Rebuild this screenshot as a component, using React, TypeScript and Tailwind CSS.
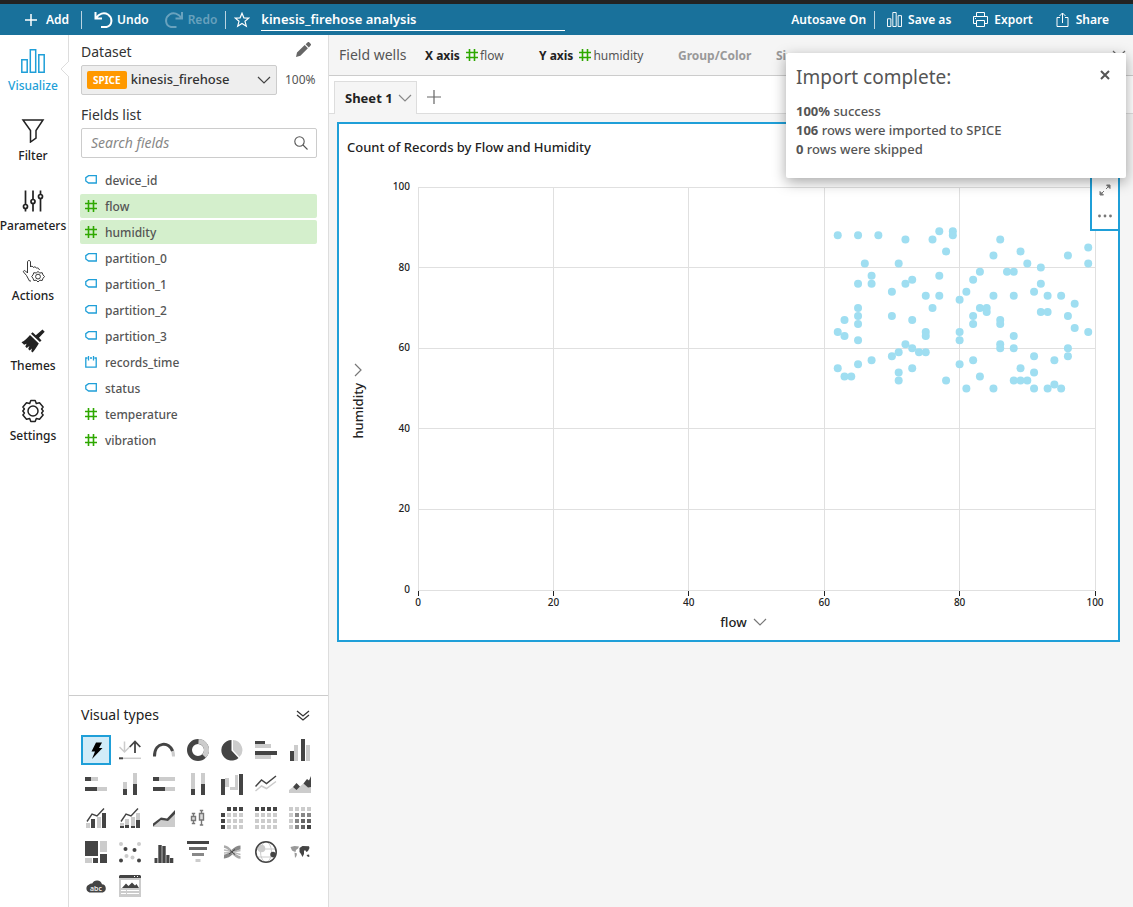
import React, { useState } from "react";

const DARK = "#444444";
const LIGHT = "#cccccc";

const points = [
  [62, 88], [65, 88], [68, 88], [72, 87], [76, 87], [77, 89], [79, 89], [79, 88],
  [78, 84], [86, 87], [85, 83], [89, 84], [90, 81], [92, 80], [96, 83], [99, 85],
  [99, 81], [66, 81], [71, 81], [67, 78], [67, 76], [65, 76], [72, 76], [73, 77],
  [70, 74], [77, 78], [75, 73], [77, 73], [76, 70], [83, 79], [82, 77], [81, 74],
  [80, 72], [87, 79], [88, 79], [85, 73], [88, 73], [83, 70], [84, 70], [84, 69],
  [82, 68], [82, 66], [86, 67], [86, 66], [91, 74], [92, 76], [93, 73], [95, 73],
  [97, 71], [96, 68], [92, 69], [93, 69], [97, 65], [99, 64], [65, 70], [65, 68],
  [65, 66], [65, 62], [63, 67], [62, 64], [63, 63], [70, 68], [73, 67], [75, 64],
  [75, 63], [72, 61], [73, 60], [74, 59], [75, 59], [71, 59], [70, 58], [67, 57],
  [65, 56], [62, 55], [63, 53], [64, 53], [71, 54], [71, 52], [73, 55], [78, 52],
  [80, 64], [80, 62], [80, 56], [82, 57], [83, 53], [81, 50], [85, 50], [86, 61],
  [86, 60], [88, 63], [88, 60], [91, 58], [91, 54], [89, 55], [88, 52], [89, 52],
  [90, 52], [91, 50], [93, 50], [94, 51], [95, 50], [94, 57], [96, 60], [96, 58],
];

const ticks = [0, 20, 40, 60, 80, 100];

const fields = [
  { name: "device_id", type: "string" },
  { name: "flow", type: "number", selected: true },
  { name: "humidity", type: "number", selected: true },
  { name: "partition_0", type: "string" },
  { name: "partition_1", type: "string" },
  { name: "partition_2", type: "string" },
  { name: "partition_3", type: "string" },
  { name: "records_time", type: "date" },
  { name: "status", type: "string" },
  { name: "temperature", type: "number" },
  { name: "vibration", type: "number" },
];

function HashIcon() {
  return (
    <svg width="12" height="12" viewBox="0 0 12 12" fill="none" stroke="#2ea800" strokeWidth="1.6">
      <path d="M3.5 0v12M8.5 0v12M0 3.5h12M0 8.5h12" />
    </svg>
  );
}

function FieldIcon({ type }: { type: string }) {
  if (type === "number") return <HashIcon />;
  if (type === "date")
    return (
      <svg width="12" height="12" viewBox="0 0 12 12" fill="none" stroke="#1f9fd8" strokeWidth="1.3">
        <path d="M2.5 2H.8v9.2h10.4V2H9.5M5 2h2M3.5 0v4.500M8.500 0v4.500" />
      </svg>
    );
  return (
    <svg width="12" height="12" viewBox="0 0 12 12" fill="none" stroke="#1f9fd8" strokeWidth="1.3">
      <path d="M3.6 1.600h7.7v7.400H3.6L.8 7V3.600z" />
    </svg>
  );
}

function Chevron({ color = "#666666" }: { color?: string }) {
  return (
    <svg width="14" height="14" viewBox="0 0 14 14" fill="none" stroke={color} strokeWidth="1.2">
      <path d="M1 4l6 6 6-6" />
    </svg>
  );
}

function BarsIcon({ size }: { size: number }) {
  return (
    <svg width={size} height={size} viewBox="0 0 24 24" fill="none" stroke="currentColor" strokeWidth="1.5">
      <path d="M.8 10.8h5.4v12.4H.8zM9.3.8h5.4v22.4H9.3zM17.8 5.8h5.4v17.4h-5.4z" />
    </svg>
  );
}

const navItems = [
  { label: "Visualize", icon: <BarsIcon size={24} /> },
  {
    label: "Filter",
    icon: (
      <svg width="24" height="24" viewBox="0 0 24 24" fill="none" stroke="currentColor" strokeWidth="1.5">
        <path d="M2 1h20l-7 10.5v7.5L9.5 23V11.5z" />
      </svg>
    ),
  },
  {
    label: "Parameters",
    icon: (
      <svg width="24" height="24" viewBox="0 0 24 24" fill="none" stroke="currentColor" strokeWidth="1.7">
        <path d="M4.5 1.500v13.500M4.5 20v2.5M12 1.500V10M12 15v7.5M19.5 1.500V5M19.5 10v12.5" />
        <circle cx="4.5" cy="17.5" r="2" />
        <circle cx="12" cy="12.5" r="2" />
        <circle cx="19.5" cy="7.500" r="2" />
      </svg>
    ),
  },
  {
    label: "Actions",
    icon: (
      <svg width="24" height="24" viewBox="0 0 24 24" fill="none" stroke="currentColor" strokeWidth="0.9">
        <path d="M10 22H8.5l-3-5.5-3-3.5c-.6-1 1-2 2-1l2 2V3c0-2 3-2 3 0v5c.5-1.2 2.5-1 3 .5.6-1 2.4-.8 3 .7 1-.7 2.5 0 3 1.8" />
        <path d="M17 12.5l1.8 1.5 2.4-.3.8 2.2 1.5 1.6-1.5 1.8-.8 2.2-2.4-.3L17 23l-1.8-1.8-2.4.3-.8-2.2-1.300-1.8 1.300-1.6.8-2.2 2.4.3z" />
        <circle cx="17" cy="17.6" r="2.4" />
      </svg>
    ),
  },
  {
    label: "Themes",
    icon: (
      <svg width="24" height="24" viewBox="0 0 24 24" fill="currentColor">
        <path d="M21.5.5l2.2 2.3-5.7 6 2.5 2.7-1.600 1.6L10 4.800l1.600-1.600 3.200 3.100z" />
        <path d="M9 5.900l8.800 8.5c-1.800 2.8-3.600 6.2-6.200 9.1l-1.400-1.300.8-2.600-2.400 1.800-1.400-1.300 1.200-3-2.700 1.800-1.400-1.5 1.300-2.600-2.5 1L.5 13.300C3.800 11.600 6.200 9.200 9 5.900z" />
      </svg>
    ),
  },
  {
    label: "Settings",
    icon: (
      <svg width="24" height="24" viewBox="0 0 24 24" fill="none" stroke="currentColor" strokeWidth="1.5" strokeLinejoin="round">
        <path d="M9.8 1.500h4.400l1.100 3 3.200-.7 3.600 4.200-1.500 2 1.600 2-1.600 2 1.500 2-3.600 4.200-3.200-.7-1.100 3H9.800l-1.100-3-3.200.7L1.900 16l1.500-2-1.600-2 1.600-2-1.500-2 3.600-4.200 3.200.7z" />
        <circle cx="12" cy="12" r="5" />
      </svg>
    ),
  },
];

function Squares({ colors }: { colors: string[] }) {
  return (
    <>
      {colors.map((c, i) => (
        <rect key={i} x={(i % 4) * 6} y={Math.floor(i / 4) * 6} width="4" height="4" fill={c} />
      ))}
    </>
  );
}

// every drawing sits on a 22 x 22 grid
const visualTypes = [
  { name: "AutoGraph", art: <path fill="#000" d="M11 3.5h6L14 9h3.5L7 20l3-7.5H6.5z" /> },
  {
    name: "KPI",
    art: (
      <g fill="none" strokeWidth="1.5">
        <path stroke={LIGHT} d="M5.5 2.5V13M.5 8l5 5 5-5" />
        <path stroke={DARK} strokeWidth="1.8" d="M16 14V2.5M10.7 8L16 2.5 21.3 8" />
        <path stroke={LIGHT} d="M4 19.3h18" />
        <path stroke={DARK} strokeWidth="2" d="M0 19.3h4" />
      </g>
    ),
  },
  {
    name: "Gauge chart",
    art: (
      <g fill="none" strokeWidth="3">
        <path stroke={LIGHT} d="M18.5 9.5Q20.5 12 20.5 17.5" />
        <path stroke={DARK} d="M1.5 17.5C1.5 2 17 2.5 19.5 12" />
      </g>
    ),
  },
  {
    name: "Donut chart",
    art: (
      <g fill="none" strokeWidth="5">
        <circle cx="11" cy="11" r="8.5" stroke={DARK} />
        <path stroke={LIGHT} d="M11.5 2.5A8.5 8.5 0 0 1 17 17" />
      </g>
    ),
  },
  {
    name: "Pie chart",
    art: (
      <>
        <path fill={DARK} d="M10.5 1v10.5l7 7.5A10.3 10.3 0 1 1 10.5 1z" />
        <path fill={LIGHT} d="M12 1a10 10 0 0 1 6.5 17L12 11z" />
      </>
    ),
  },
  {
    name: "Horizontal bar chart",
    art: (
      <>
        <path fill={LIGHT} d="M0 5h16v4H0zM0 16h16v4H0z" />
        <path fill={DARK} d="M0 2h10v3H0zM0 12h22v4H0z" />
      </>
    ),
  },
  {
    name: "Vertical bar chart",
    art: (
      <>
        <path fill={DARK} d="M1 12h4v10H1zM12 0h4v22h-4z" />
        <path fill={LIGHT} d="M5 6h4v16H5zM17 6h4v16h-4z" />
      </>
    ),
  },
  {
    name: "Horizontal stacked bar chart",
    art: (
      <>
        <path fill={DARK} d="M0 4h6v4H0zM0 14h12v4H0z" />
        <path fill={LIGHT} d="M6 4h7v4H6zM12 14h10v4H12z" />
      </>
    ),
  },
  {
    name: "Vertical stacked bar chart",
    art: (
      <>
        <path fill={DARK} d="M4 16h4v6H4zM14 11h4v11h-4z" />
        <path fill={LIGHT} d="M4 9h4v7H4zM14 0h4v11h-4z" />
      </>
    ),
  },
  {
    name: "Horizontal stacked 100% bar chart",
    art: (
      <>
        <path fill={DARK} d="M0 4h6v4H0zM0 14h12v4H0z" />
        <path fill={LIGHT} d="M6 4h16v4H6zM12 14h10v4H12z" />
      </>
    ),
  },
  {
    name: "Vertical stacked 100% bar chart",
    art: (
      <>
        <path fill={DARK} d="M4 16h4v6H4zM14 11h4v11h-4z" />
        <path fill={LIGHT} d="M4 0h4v16H4zM14 0h4v11h-4z" />
      </>
    ),
  },
  {
    name: "Waterfall chart",
    art: (
      <>
        <path fill={DARK} d="M0 6h4v16H0zM18 1h4v21h-4z" />
        <path fill={LIGHT} d="M4 5h4v9H4zM9 14h5v3H9zM14 2h3v15h-3z" />
      </>
    ),
  },
  {
    name: "Line chart",
    art: (
      <g fill="none" strokeWidth="1.5">
        <path stroke={DARK} d="M.5 13.5L6.5 7l5 3.5L21 3" />
        <path stroke={LIGHT} d="M.5 18l6-5 5 2.5 9.5-7" />
      </g>
    ),
  },
  {
    name: "Area chart",
    art: (
      <>
        <path fill={LIGHT} d="M0 17l4-3 4 2 7-6 4 4h3v6H0z" />
        <path fill={DARK} d="M4 14l3.5-4 3.5 3.5L7.5 17zM14.5 10.5L18 6l2 1.500L22 3v11l-3 .5z" />
      </>
    ),
  },
  {
    name: "Clustered bar combo chart",
    art: (
      <>
        <path fill={LIGHT} d="M1 16h4v5H1zM12 10h4v11h-4z" />
        <path fill={DARK} d="M6 12h4v9H6zM17 6h4v15h-4z" />
        <path fill="none" stroke={DARK} strokeWidth="1.4" d="M2 14.5L7 7l5 2 7-7.5" />
      </>
    ),
  },
  {
    name: "Stacked bar combo chart",
    art: (
      <>
        <path fill={LIGHT} d="M1 16h4v3H1zM6 12h4v6H6zM12 10h4v9h-4zM17 6h4v7h-4z" />
        <path fill={DARK} d="M1 19h4v2H1zM6 18h4v3H6zM12 19h4v2h-4zM17 13h4v8h-4z" />
        <path fill="none" stroke={DARK} strokeWidth="1.4" d="M2 14.5L7 7l5 2 7-7.5" />
      </>
    ),
  },
  {
    name: "Area line chart",
    art: (
      <>
        <path fill={LIGHT} d="M0 18l8-5 7 1 7-9v15H0z" />
        <path fill={DARK} d="M0 16.500l8-6 6 1 8-8.500v4l-7 7-7-1L0 19.500z" />
      </>
    ),
  },
  {
    name: "Box plot",
    art: (
      <g fill="#dddddd" stroke="#777777" strokeWidth="1.4">
        <path d="M6.5 6v11M4.8 6.500h3.4M4.8 16.5h3.4M14.5 3v15.5M12.8 3.5h3.4M12.8 18h3.4" />
        <path d="M4.5 9.500h4v4h-4zM12.5 6.500h4v6.500h-4z" />
      </g>
    ),
  },
  {
    name: "Pivot table",
    art: <Squares colors={["none", DARK, DARK, DARK, DARK, LIGHT, LIGHT, LIGHT, DARK, LIGHT, LIGHT, LIGHT, DARK, LIGHT, LIGHT, LIGHT]} />,
  },
  {
    name: "Table",
    art: <Squares colors={[DARK, DARK, DARK, DARK, LIGHT, LIGHT, LIGHT, LIGHT, LIGHT, LIGHT, LIGHT, LIGHT, LIGHT, LIGHT, LIGHT, LIGHT]} />,
  },
  {
    name: "Heat map",
    art: <Squares colors={[LIGHT, LIGHT, LIGHT, LIGHT, LIGHT, "#888888", "#888888", "#888888", LIGHT, "#888888", "#666666", "#666666", LIGHT, "#888888", "#666666", DARK]} />,
  },
  {
    name: "Tree map",
    art: (
      <>
        <path fill={DARK} d="M0 0h13v15H0zM15 13h7v9h-7zM8 17h5v5H8z" />
        <path fill={LIGHT} d="M15 0h7v11h-7zM0 17h7v5H0z" />
      </>
    ),
  },
  {
    name: "Scatter plot",
    art: (
      <>
        <g fill={DARK}>
          <circle cx="6.5" cy="8" r="2" />
          <circle cx="15.5" cy="9" r="2" />
          <circle cx="2" cy="19.5" r="2" />
          <circle cx="20" cy="19.5" r="2" />
        </g>
        <g fill={LIGHT}>
          <circle cx="2" cy="3" r="2" />
          <circle cx="20" cy="3" r="2" />
          <circle cx="7.5" cy="15" r="2" />
          <circle cx="13.5" cy="16.5" r="2" />
        </g>
      </>
    ),
  },
  {
    name: "Histogram",
    art: <path fill={DARK} d="M1.5 17h3v5h-3zM5.300 4h3.400v18H5.300zM9.300 5h3.400v17H9.300zM13.300 14h3.200v8h-3.200zM17 17h3.300v5H17z" />,
  },
  {
    name: "Funnel chart",
    art: (
      <>
        <path fill={DARK} d="M0 0h22v3H0z" />
        <path fill="#666666" d="M2 6h18v3H2z" />
        <path fill="#888888" d="M5 12h12v3H5z" />
        <path fill={LIGHT} d="M8.5 18h5v3h-5z" />
      </>
    ),
  },
  {
    name: "Sankey diagram",
    art: (
      <g fill="none">
        <path stroke="#888888" strokeWidth="4" d="M3 15.5C10 16 12 6.500 19.500 6.500" />
        <path stroke="#aaaaaa" strokeWidth="2.5" d="M3 5.5C10 6 12 16.5 19.500 16.5" />
        <path stroke="#bbbbbb" strokeWidth="1.5" d="M3 9c6 .5 10 3 16.500 4.500M3 12c7 0 11-2 16.500-2.500" />
        <path stroke={DARK} strokeWidth="1" d="M8 13l6-4.500M9 9.500l5 4" />
      </g>
    ),
  },
  {
    name: "Points on map",
    art: (
      <>
        <g fill="none" stroke={LIGHT} strokeWidth="1">
          <ellipse cx="11" cy="11" rx="5.5" ry="10" />
          <path d="M1 8h20M2 16h18" />
        </g>
        <circle cx="6.5" cy="7.5" r="3.8" fill={LIGHT} />
        <circle cx="18" cy="13.5" r="2.7" fill={DARK} />
        <circle cx="11" cy="11" r="10.200" fill="none" stroke={DARK} strokeWidth="1.6" />
      </>
    ),
  },
  {
    name: "Filled map",
    art: (
      <>
        <path fill="#999999" d="M1.5 6l4-1 4.5.5-1 2L7 9l-.5 2L5 10.5 3 9.5zM5.5 11.5l2.5 1-.5 2.500L6 17z" />
        <path fill={DARK} d="M10.5 7l3-2 6.500.3.5 1.700-1.500 3-1.500 1-1.500-2-1 1v3l-1.500 3-1.500-3-1.500-2zM17.5 14l2.500-.5.5 2-1.500.5z" />
      </>
    ),
  },
  {
    name: "Word cloud",
    art: (
      <>
        <path fill={DARK} d="M4.500 17.500a4.200 4.200 0 0 1-.3-8 3 3 0 0 1 3-1A5.300 5.300 0 0 1 17 9.300a4.200 4.200 0 0 1 .8 8.200z" />
        <text x="11" y="15.500" textAnchor="middle" fontSize="7" fontWeight="500" fill="#ffffff">abc</text>
      </>
    ),
  },
  {
    name: "Insight",
    art: (
      <>
        <path fill={LIGHT} d="M0 3h22v19H0z" />
        <path fill={DARK} d="M1 0h20l1 1v2H0V1z" />
        <path fill="#fff" d="M2 5h18v8H2zM2 15h5v1H2zM8 15h12v1H8zM2 18h5v1H2zM8 18h12v1H8zM15 1h1v1h-1zM18 1h1v1h-1z" />
        <path fill={DARK} d="M3 13l4-4.500L9.500 11 13 7.500l3 3 1.500-1.500L20 13z" />
      </>
    ),
  },
];

function Header() {
  return (
    <header className="border-t-4 border-[#232323] bg-[#19719b] h-[35px] shrink-0 flex items-center px-6 text-white text-xs font-semibold">
      <button className="flex items-center gap-2">
        <svg width="14" height="14" viewBox="0 0 14 14" stroke="currentColor" strokeWidth="1.5">
          <path d="M7 1v12M1 7h12" />
        </svg>
        Add
      </button>
      <div className="w-px h-[18px] bg-white/70 ml-3" />
      <button className="flex items-center gap-1 ml-3">
        <svg width="19" height="16" viewBox="0 0 19 16" fill="none" stroke="currentColor" strokeWidth="2">
          <path d="M1.5 0v6.5H8M2 6c3-4.5 8-6 12-3.5 5 3.5 4.5 11-1.5 12.5H7" />
        </svg>
        Undo
      </button>
      <button disabled className="flex items-center gap-1 ml-4 text-white/35">
        <svg width="19" height="16" viewBox="0 0 19 16" fill="none" stroke="currentColor" strokeWidth="2">
          <path d="M17 0v6.5h-6.5M16.5 6c-3-4.5-8-6-12-3.5-5 3.5-4.5 11 1.5 12.5h5.5" />
        </svg>
        Redo
      </button>
      <div className="w-px h-[18px] bg-white/70 ml-2" />
      <button aria-label="Favorite" className="ml-2">
        <svg width="16" height="16" viewBox="0 0 16 16" fill="none" stroke="currentColor" strokeWidth="1.2">
          <path d="M8 1.200l1.900 4.600 4.900.3-3.800 3.200 1.300 4.900L8 11.500l-4.300 2.700L5 9.300 1.200 6.100l4.900-.3z" />
        </svg>
      </button>
      <input
        aria-label="Analysis name"
        defaultValue="kinesis_firehose analysis"
        className="ml-[11px] w-[304px] h-[22px] border-b border-white bg-transparent text-[13px] outline-none"
      />
      <span className="ml-auto">Autosave On</span>
      <div className="w-px h-[18px] bg-white/70 ml-2" />
      <button className="flex items-center gap-[6px] ml-3">
        <BarsIcon size={15} />
        Save as
      </button>
      <button className="flex items-center gap-[6px] ml-[22px]">
        <svg width="15" height="15" viewBox="0 0 15 15" fill="none" stroke="currentColor">
          <path d="M3.5 4V.5h8V4M3.5 11.5h-3v-7h14v7h-3M3.5 8.500h8v6h-8zM2 6.500h1" />
        </svg>
        Export
      </button>
      <button className="flex items-center gap-[6px] ml-[22px]">
        <svg width="15" height="15" viewBox="0 0 15 15" fill="none" stroke="currentColor">
          <path d="M5 5.500H2v9h11v-9h-3M7.500 11V1M4.500 4l3-3 3 3" />
        </svg>
        Share
      </button>
    </header>
  );
}

function Nav() {
  return (
    <nav className="w-[69px] shrink-0 border-r border-[#dddddd] relative flex flex-col pt-[14px] pr-[2px] gap-[25px]">
      {navItems.map((item, i) => (
        <button
          key={item.label}
          className={
            i === 0
              ? "h-[45px] flex flex-col items-center justify-between text-xs font-medium text-[#1f9fd8]"
              : "h-[45px] flex flex-col items-center justify-between text-xs font-medium text-[#222222]"
          }
        >
          {item.icon}
          {item.label}
        </button>
      ))}
      <svg className="absolute top-[26px] -right-px" width="9" height="16" viewBox="0 0 9 16" fill="#fff" stroke="#dddddd">
        <path d="M9 0L1 8l8 8" />
      </svg>
    </nav>
  );
}

function DataPanel() {
  const [visual, setVisual] = useState("AutoGraph");

  return (
    <aside className="w-[260px] shrink-0 border-r border-[#dddddd] flex flex-col text-[#333333]">
      <div className="px-[11px] pt-[7px] flex flex-col flex-1">
        <div className="flex items-center justify-between pl-px pr-[5px] h-5">
          <label htmlFor="dataset" className="text-sm">Dataset</label>
          <button aria-label="Edit dataset" className="mb-1">
            <svg width="18" height="18" viewBox="0 0 18 18" fill="#666666">
              <path d="M2 16l1-4.500 7.700-7.400 3.200 3.200-7.500 7.500zM11.600 3.200L13.500 1.500c.6-.6 1.300-.6 1.900 0l1.200 1.200c.6.6.6 1.200 0 1.800l-1.800 1.900z" />
            </svg>
          </button>
        </div>
        <div className="flex items-center pl-px mt-[3px]">
          <div className="w-[196px] h-[30px] bg-[#eeeeee] border border-[#cccccc] rounded-xs flex items-center pl-[5px] relative">
            <span className="bg-[#ff9900] text-white text-[10px] leading-[18px] font-bold px-[6px] rounded-xs">SPICE</span>
            <select id="dataset" className="appearance-none bg-transparent text-[13px] font-medium flex-1 pl-1 pr-6 outline-none">
              <option>kinesis_firehose</option>
            </select>
            <span className="absolute right-[5px] pointer-events-none">
              <Chevron color="#444444" />
            </span>
          </div>
          <span className="text-xs text-[#555555] ml-2">100%</span>
        </div>
        <label htmlFor="search" className="text-sm leading-5 pl-px mt-[10px]">Fields list</label>
        <div className="ml-px mt-[3px] h-[30px] border border-[#cccccc] rounded-xs flex items-center pl-[9px] pr-2">
          <input
            id="search"
            placeholder="Search fields"
            className="flex-1 min-w-0 text-sm italic outline-none placeholder:text-[#888888]"
          />
          <svg width="14" height="14" viewBox="0 0 14 14" fill="none" stroke="#555555" strokeWidth="1.1">
            <circle cx="5.500" cy="5.500" r="4.700" />
            <path d="M9 9l4.500 4.500" />
          </svg>
        </div>
        <ul className="mt-[10px] flex flex-col gap-[2px] text-xs text-[#555555] font-medium">
          {fields.map((f) => (
            <li
              key={f.name}
              className={
                f.selected
                  ? "h-6 flex items-center gap-2 pl-[5px] rounded-xs bg-[#d4efcc]"
                  : "h-6 flex items-center gap-2 pl-[5px] rounded-xs"
              }
            >
              <FieldIcon type={f.type} />
              <span className="pt-[2px]">{f.name}</span>
            </li>
          ))}
        </ul>
      </div>
      <section className="border-t border-[#cccccc] pl-3 pr-[11px] pt-[9px] pb-[6px]">
        <div className="flex items-center justify-between pr-[7px]">
          <h2 className="text-sm leading-5 text-[#222222]">Visual types</h2>
          <button aria-label="Collapse visual types">
            <svg width="14" height="14" viewBox="0 0 14 14" fill="none" stroke="#333333" strokeWidth="1.3">
              <path d="M1 3l6 5 6-5M1 7l6 5 6-5" />
            </svg>
          </button>
        </div>
        <div className="grid grid-cols-[repeat(7,30px)] gap-1 mt-[10px]">
          {visualTypes.map((v) => (
            <button
              key={v.name}
              aria-label={v.name}
              onClick={() => setVisual(v.name)}
              className={
                visual === v.name
                  ? "size-[30px] flex items-center justify-center border-2 border-[#1f9fd8] bg-[#d2ecf8]"
                  : "size-[30px] flex items-center justify-center"
              }
            >
              <svg width="22" height="22" viewBox="0 0 22 22" className="shrink-0">
                {v.art}
              </svg>
            </button>
          ))}
        </div>
      </section>
    </aside>
  );
}

function FieldWells() {
  return (
    <div className="h-[41px] shrink-0 border-b border-[#cccccc] flex items-center pl-[10px] pr-[7px] text-xs whitespace-nowrap">
      <span className="text-sm text-[#555555] w-[86px]">Field wells</span>
      <div className="flex items-center w-[114px]">
        <b className="text-[#222222] mr-[6px] pt-[2px]">X axis</b>
        <HashIcon />
        <span className="text-[#555555] ml-[2px] pt-[2px]">flow</span>
      </div>
      <div className="flex items-center w-[139px]">
        <b className="text-[#222222] mr-[6px] pt-[2px]">Y axis</b>
        <HashIcon />
        <span className="text-[#555555] ml-[2px] pt-[2px]">humidity</span>
      </div>
      <b className="text-[#999999] w-[98px] pt-[2px]">Group/Color</b>
      <b className="text-[#999999] pt-[2px]">Size</b>
      <button aria-label="Expand field wells" className="ml-auto mb-[2px]">
        <Chevron />
      </button>
    </div>
  );
}

function Chart() {
  return (
    <svg width="100%" height="403" className="overflow-visible flex-1 min-w-0" fontSize="10" fontWeight="500" fill="#222222">
      {ticks.map((t) => (
        <g key={t} shapeRendering="crispEdges">
          <line x1={`${t}%`} x2={`${t}%`} y1="0" y2="100%" stroke="#e0e0e0" />
          <line x1="0" x2="100%" y1={`${t}%`} y2={`${t}%`} stroke="#e0e0e0" />
        </g>
      ))}
      {ticks.map((t) => (
        <g key={t}>
          <text x="-8" y={`${100 - t}%`} dy="3" textAnchor="end">{t}</text>
          <svg x={`${t}%`} y="100%" className="overflow-visible">
            <path d="M0 1v5" stroke="#222222" shapeRendering="crispEdges" />
            <text y="16" textAnchor="middle">{t}</text>
          </svg>
        </g>
      ))}
      {points.map(([x, y]) => (
        <circle key={`${x}-${y}`} cx={`${x}%`} cy={`${100 - y}%`} r="4" fill="#9fdef1" />
      ))}
    </svg>
  );
}

function Visual() {
  return (
    <section className="relative ml-2 mr-[13px] mt-2 bg-white border-2 border-[#1f9fd8] pt-[13px] pb-2 text-[#222222] text-[13px] font-medium">
      <h1 className="leading-5 pl-2">Count of Records by Flow and Humidity</h1>
      <div className="flex mt-[30px] pr-[23px]">
        <button className="w-[79px] pl-[10px] pt-6 flex flex-col items-start justify-center gap-[6px]">
          <span className="w-[18px] flex justify-center -rotate-90">
            <Chevron color="#777777" />
          </span>
          <span className="[writing-mode:vertical-rl] rotate-180 leading-[18px]">humidity</span>
        </button>
        <Chart />
      </div>
      <div className="flex justify-center pl-[79px] pr-[49px] mt-[22px]">
        <button className="flex items-center gap-[6px] leading-5">
          flow
          <Chevron color="#777777" />
        </button>
      </div>
      {/* on-visual menu */}
      <div className="absolute -top-[2px] -right-[2px] w-[30px] h-[109px] bg-white border-2 border-[#1f9fd8] flex flex-col items-center justify-end gap-3 pb-[5px]">
        <button aria-label="Maximize">
          <svg width="12" height="12" viewBox="0 0 12 12" fill="#777777" stroke="#777777">
            <path d="M7.500 1H11v3.500zM11 1L7 5M1 7.500V11h3.500zM1 11l4-4" />
          </svg>
        </button>
        <button aria-label="Menu options">
          <svg width="16" height="16" viewBox="0 0 16 16" fill="#777777">
            <circle cx="2.5" cy="8" r="1.4" />
            <circle cx="8" cy="8" r="1.4" />
            <circle cx="13.5" cy="8" r="1.4" />
          </svg>
        </button>
      </div>
    </section>
  );
}

function Toast({ onClose }: { onClose: () => void }) {
  return (
    <div
      role="status"
      className="absolute top-[53px] right-[7px] w-[340px] h-[125px] bg-white rounded-xs shadow-[0_4px_14px_rgba(0,0,0,0.35)] px-[10px] pt-[11px] text-[#555555]"
    >
      <div className="flex justify-between items-start">
        <h2 className="text-[19px] leading-[26px]">Import complete:</h2>
        <button aria-label="Close" onClick={onClose} className="mt-1 mr-1">
          <svg width="14" height="14" viewBox="0 0 14 14" stroke="#555555" strokeWidth="2">
            <path d="M3 3l8 8M11 3l-8 8" />
          </svg>
        </button>
      </div>
      <div className="mt-3 text-[13px] leading-[19px] font-medium">
        <p><b>100%</b> success</p>
        <p><b>106</b> rows were imported to SPICE</p>
        <p><b>0</b> rows were skipped</p>
      </div>
    </div>
  );
}

export function App() {
  const [showToast, setShowToast] = useState(true);

  return (
    <div className="relative min-h-screen flex flex-col bg-white font-['Noto_Sans',sans-serif] overflow-hidden">
      <Header />
      <div className="flex flex-1">
        <Nav />
        <DataPanel />
        <main className="flex-1 min-w-0 flex flex-col bg-[#f5f5f5]">
          <FieldWells />
          <div className="h-[38px] shrink-0 bg-white border-b border-[#dddddd] flex items-end pl-[5px]">
            <button className="h-[33px] -mb-px w-[83px] border border-b-0 border-[#dddddd] bg-[#f5f5f5] flex items-center justify-between pl-[10px] pr-1 text-[13px] font-bold text-[#222222]">
              <span className="pt-px">Sheet 1</span>
              <Chevron color="#888888" />
            </button>
            <button aria-label="Add sheet" className="ml-[10px] mb-[9px]">
              <svg width="14" height="14" viewBox="0 0 14 14" stroke="#666666" strokeWidth="1.2">
                <path d="M7 0v14M0 7h14" />
              </svg>
            </button>
          </div>
          <Visual />
        </main>
      </div>
      {showToast && <Toast onClose={() => setShowToast(false)} />}
    </div>
  );
}

export default App;
